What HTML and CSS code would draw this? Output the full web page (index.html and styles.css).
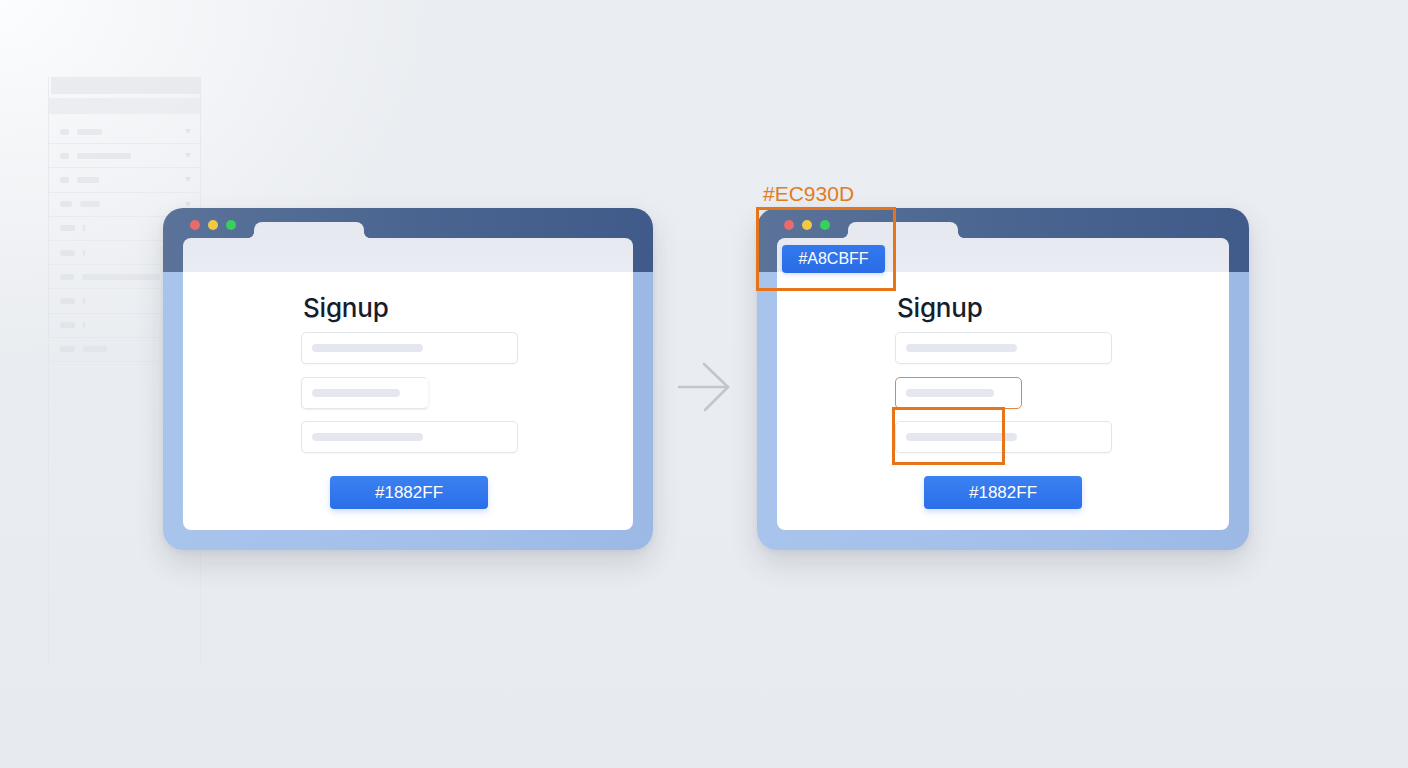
FILE: index.html
```html
<!DOCTYPE html>
<html lang="en">
<head>
<meta charset="utf-8">
<title>Signup highlight</title>
<link rel="stylesheet" href="styles.css">
</head>
<body>
<div class="page">
  <div class="ghost-table">
    <div class="gt-head1"></div>
    <div class="gt-head2"></div>
    <div class="gt-row"><span class="gt-a w9"></span><span class="gt-b w25"></span><span class="gt-chev"></span></div>
    <div class="gt-row"><span class="gt-a w9"></span><span class="gt-b w54"></span><span class="gt-chev"></span></div>
    <div class="gt-row"><span class="gt-a w9"></span><span class="gt-b w22"></span><span class="gt-chev"></span></div>
    <div class="gt-row"><span class="gt-a w12"></span><span class="gt-b w20"></span><span class="gt-chev"></span></div>
    <div class="gt-row"><span class="gt-a w15"></span><span class="gt-tick"></span></div>
    <div class="gt-row"><span class="gt-a w15"></span><span class="gt-tick"></span></div>
    <div class="gt-row"><span class="gt-a w14"></span><span class="gt-b w78"></span></div>
    <div class="gt-row"><span class="gt-a w15"></span><span class="gt-tick"></span></div>
    <div class="gt-row"><span class="gt-a w15"></span><span class="gt-tick"></span></div>
    <div class="gt-row"><span class="gt-a w15"></span><span class="gt-b w24"></span></div>
  </div>

  <div class="stage">
    <div class="browser">
      <div class="chrome">
        <div class="dots"><span class="dot red"></span><span class="dot yellow"></span><span class="dot green"></span></div>
        <div class="tab"></div>
      </div>
      <div class="panel">
        <div class="form">
          <h1 class="title">Signup</h1>
          <div class="field"><span class="ph ph-long"></span></div>
          <div class="field field-short field-cut"><span class="ph ph-short"></span></div>
          <div class="field"><span class="ph ph-long"></span></div>
          <button class="btn">#1882FF</button>
        </div>
      </div>
    </div>

    <div class="arrow">
      <svg width="56" height="52" viewBox="0 0 56 52" fill="none" stroke="#c2c6cc" stroke-width="2.6" stroke-linecap="round" stroke-linejoin="round">
        <path d="M2 25 H51"/>
        <path d="M27 2 L51 25 L28 48"/>
      </svg>
    </div>

    <div class="browser browser-b">
      <div class="chrome">
        <div class="dots"><span class="dot red"></span><span class="dot yellow"></span><span class="dot green"></span></div>
        <div class="tab"></div>
      </div>
      <div class="panel">
        <div class="form">
          <h1 class="title">Signup</h1>
          <div class="field"><span class="ph ph-long"></span></div>
          <div class="field field-short field-hl"><span class="ph ph-short"></span></div>
          <div class="field"><span class="ph ph-long"></span></div>
          <button class="btn">#1882FF</button>
        </div>
      </div>
      <div class="hl-label">#EC930D</div>
      <div class="hl-chip">#A8CBFF</div>
      <div class="hl-box hl-box1"></div>
      <div class="hl-box hl-box2"></div>
    </div>
  </div>
</div>
</body>
</html>
```

FILE: styles.css
```css
* { box-sizing: border-box; }

html, body {
  margin: 0;
  padding: 0;
}

body {
  width: 1408px;
  height: 768px;
  overflow: hidden;
  font-family: "Liberation Sans", Arial, sans-serif;
  background:
    radial-gradient(ellipse 440px 360px at 0 0, rgba(252,253,254,1) 0%, rgba(248,249,251,0.75) 40%, rgba(240,242,245,0) 100%),
    linear-gradient(180deg, #eaedf1 0%, #e9ecf0 60%, #e7eaee 100%);
}

.page {
  position: relative;
  width: 1408px;
  height: 768px;
}

/* faded table in the background */
.ghost-table {
  position: absolute;
  left: 48px;
  top: 77px;
  width: 153px;
  height: 586px;
  border-left: 1px solid #e0e3e7;
  border-right: 1px solid #e0e3e7;
  opacity: 0.6;
}

.gt-head1 {
  height: 17px;
  margin-left: 2px;
  background: #e2e4e8;
}

.gt-head2 {
  height: 16px;
  margin-top: 4px;
  margin-bottom: 6px;
  background: #e6e8ec;
}

.gt-row {
  display: flex;
  align-items: center;
  height: 24.2px;
  padding-left: 11px;
  border-bottom: 1px solid #e4e6ea;
}

.gt-a, .gt-b {
  display: block;
  height: 6px;
  border-radius: 2px;
  background: #dcdfe4;
}

.gt-b { margin-left: 8px; background: #dfe2e6; }

.gt-tick {
  display: block;
  width: 2px;
  height: 6px;
  margin-left: 8px;
  background: #dcdfe4;
}

.w9 { width: 9px; }
.w12 { width: 12px; }
.w14 { width: 14px; }
.w15 { width: 15px; }
.w20 { width: 20px; }
.w22 { width: 22px; }
.w24 { width: 24px; }
.w25 { width: 25px; }
.w54 { width: 54px; }
.w78 { width: 78px; }

.gt-chev {
  margin-left: auto;
  margin-right: 9px;
  width: 0;
  height: 0;
  border-left: 3px solid transparent;
  border-right: 3px solid transparent;
  border-top: 5px solid #d6d9de;
}

/* stage with browsers */
.stage {
  position: relative;
  display: flex;
  align-items: flex-start;
  padding-top: 208px;
  padding-left: 163px;
}

.browser {
  position: relative;
  display: flex;
  flex-direction: column;
  width: 490px;
  height: 342px;
  padding: 11px 20px 20px 20px;
  border-radius: 20px;
  background:
    linear-gradient(90deg, #5b7399 0%, #4a6590 50%, #405b89 100%) top / 100% 64px no-repeat,
    linear-gradient(90deg, #a8c3ec 0%, #a4c0ea 50%, #9cb9e6 100%);
  box-shadow: 0 14px 28px rgba(60, 72, 95, 0.16), 0 2px 6px rgba(60, 72, 95, 0.08);
}

.browser-b { width: 492px; }

.chrome {
  display: flex;
  height: 19px;
}

.dots {
  display: flex;
  gap: 8px;
  margin-left: 6.5px;
  margin-top: 1px;
}

.dot {
  width: 10px;
  height: 10px;
  border-radius: 50%;
}

.red { background: #e96b6d; }
.yellow { background: #f3c944; }
.green { background: #38cf5d; }

.tab {
  position: relative;
  align-self: flex-end;
  width: 110px;
  height: 16px;
  margin-left: 18.5px;
  border-radius: 8px 8px 0 0;
  background: #e6eaf0;
}

.tab::before,
.tab::after {
  content: "";
  position: absolute;
  bottom: 0;
  width: 6px;
  height: 6px;
}

.tab::before {
  left: -6px;
  background: radial-gradient(circle at 0 0, transparent 5.6px, #e6eaf0 6.2px);
}

.tab::after {
  right: -6px;
  background: radial-gradient(circle at 100% 0, transparent 5.6px, #e6eaf0 6.2px);
}

.panel {
  flex: 1;
  border-radius: 8px;
  background: linear-gradient(180deg, #e6eaf0 0, #e9edf3 34px, #ffffff 34px, #ffffff 100%);
  padding: 54.5px 0 0 118px;
}

.form {
  display: flex;
  flex-direction: column;
  align-items: flex-start;
}

.title {
  margin: 0 0 9.5px 2px;
  font-family: Inter, "Liberation Sans", sans-serif;
  font-size: 26px;
  line-height: 30px;
  font-weight: 500;
  color: #161d2c;
  letter-spacing: -0.2px;
}

.field {
  display: flex;
  align-items: center;
  width: 217px;
  height: 32px;
  padding-left: 10px;
  border: 1px solid #e2e5ea;
  border-radius: 5px;
  background: #fff;
  box-shadow: 0 1px 2px rgba(30, 40, 60, 0.04);
}

.field + .field { margin-top: 12.5px; }

.field-short { width: 127px; }

.field-cut {
  border-right-color: transparent;
  box-shadow: 0 1px 2px rgba(30, 40, 60, 0.05), 2px 1px 2px rgba(30, 40, 60, 0.03);
}

.field-hl { border-color: #dc8a44; }

.ph {
  display: block;
  height: 8px;
  border-radius: 4px;
  background: #e4e8ee;
}

.ph-long { width: 111px; }
.ph-short { width: 88px; }

.btn {
  margin: 23px 0 0 29px;
  width: 158px;
  height: 33px;
  border: 0;
  border-radius: 4px;
  background: linear-gradient(180deg, #3a81f1 0%, #2b6fe8 100%);
  color: #fff;
  font-family: "Liberation Sans", Arial, sans-serif;
  font-size: 17px;
  line-height: 33px;
  padding: 0;
  box-shadow: 0 3px 6px rgba(43, 111, 232, 0.22);
}

.arrow {
  width: 104px;
  display: flex;
  justify-content: center;
  margin-top: 154px;
}

/* highlight overlays */
.hl-label {
  position: absolute;
  left: 6px;
  top: -26px;
  font-family: "Liberation Sans", Arial, sans-serif;
  font-size: 21px;
  line-height: 24px;
  color: #e27c22;
  white-space: nowrap;
}

.hl-chip {
  position: absolute;
  left: 25px;
  top: 37px;
  width: 103px;
  height: 28px;
  border-radius: 4px;
  background: linear-gradient(180deg, #3379ee 0%, #2a6ce6 100%);
  color: #fff;
  font-size: 16px;
  line-height: 28px;
  text-align: center;
  box-shadow: 0 2px 4px rgba(40, 100, 220, 0.2);
}

.hl-box {
  position: absolute;
  border: 3.4px solid #e8741a;
}

.hl-box1 {
  left: -1px;
  top: -1px;
  width: 140px;
  height: 84px;
}

.hl-box2 {
  left: 135px;
  top: 199px;
  width: 113px;
  height: 58px;
}
```
